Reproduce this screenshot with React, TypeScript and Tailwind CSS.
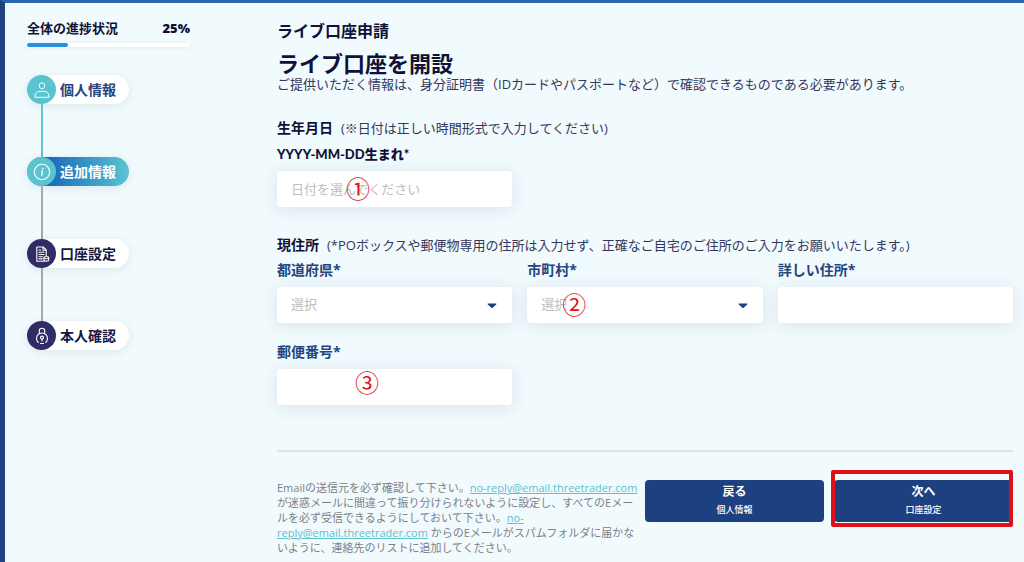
import React from 'react';
import clsx from 'clsx';

type StepState = 'done' | 'active' | 'todo';

interface Step {
  label: string;
  state: StepState;
  icon: React.ReactNode;
}

const EMAIL = 'no-reply@email.threetrader.com';

const PersonIcon = () => (
  <svg viewBox="0 0 18 18" className="h-[18px] w-[18px]" fill="none" stroke="currentColor" strokeWidth="1" strokeLinejoin="round">
    <path d="M6.4 3.4c0-.8.6-1.3 1.3-1.3h2.6c.7 0 1.3.5 1.3 1.3v1.7c0 1.5-1.1 2.6-2.6 2.6S6.4 6.6 6.4 5.1z" />
    <path d="M2 16.3V15c0-2.7 2.2-4.6 4.8-4.6h4.4c2.6 0 4.8 1.9 4.8 4.6v1.3z" />
  </svg>
);

const InfoIcon = () => (
  <svg viewBox="0 0 18 18" className="h-[18px] w-[18px]" fill="none" stroke="currentColor" strokeWidth="1.1" strokeLinecap="round">
    <circle cx="9" cy="9" r="7.7" />
    <path d="M9.4 7.8 8.7 12.4" strokeWidth="1.4" />
    <circle cx="9.8" cy="5.4" r=".5" fill="currentColor" strokeWidth=".6" />
  </svg>
);

const DocumentIcon = () => (
  <svg viewBox="0 0 18 18" className="h-[18px] w-[18px]" fill="none" stroke="currentColor" strokeWidth="1.1" strokeLinejoin="round">
    <path d="M11.6 16.2H3.8V2h6.4l3 3v6" />
    <path d="M10 2v3.300h3.200M5.600 5h2.600M5.600 7.300h5.800M5.600 9.500h5.800M5.600 11.700h4.200M5.600 13.900h4" />
    <ellipse cx="13.3" cy="12.6" rx="2.4" ry="1.1" />
    <path d="M10.9 12.6V15c0 .6 1.1 1.1 2.4 1.1s2.4-.5 2.4-1.100v-2.400" />
  </svg>
);

const LockIcon = () => (
  <svg viewBox="0 0 18 18" className="h-[18px] w-[18px]" fill="none" stroke="currentColor" strokeWidth="1.1" strokeLinecap="round">
    <path d="M6.3 6.400V4a2.700 2.700 0 0 1 5.400 0v2.400" />
    <path d="M5.300 15.500a5.500 5.500 0 1 1 7.400 0" />
    <path d="M7.500 16.500h3" />
    <circle cx="9" cy="10.6" r="1.5" />
    <path d="M9 12.100v2" />
  </svg>
);

const steps: Step[] = [
  { label: '個人情報', state: 'done', icon: <PersonIcon /> },
  { label: '追加情報', state: 'active', icon: <InfoIcon /> },
  { label: '口座設定', state: 'todo', icon: <DocumentIcon /> },
  { label: '本人確認', state: 'todo', icon: <LockIcon /> }
];

const fieldClass =
  'block h-9 w-full appearance-none rounded bg-white px-[14px] text-[13px] shadow-[0_2px_16px_rgba(40,70,100,0.12)] outline-none placeholder:text-[#bcbdc0]';

const Sidebar = ({ progress }: { progress: number }) => (
  <aside className="w-[272px] shrink-0 pt-[15px] pl-[22px]">
    <div className="w-[163px]">
      <div className="flex justify-between text-[13px] leading-5 font-bold text-[#0f1238]">
        <span>全体の進捗状況</span>
        <span className="font-extrabold">{progress}%</span>
      </div>
      <div className="mt-[5px] h-1 rounded-full bg-white shadow-[0_1px_4px_rgba(40,70,100,0.08)]">
        <div className="h-1 rounded-full bg-[#2b8fdc]" style={{ width: `${progress}%` }} />
      </div>
    </div>

    <ol className="mt-7">
      {steps.map((step, i) => (
        <li key={step.label}>
          {i > 0 && (
            <div className={clsx('ml-[14px] h-[53px] w-[2px]', i === 1 ? 'bg-[#62c4cd]' : 'bg-[#a5aab1]')} />
          )}
          <button
            type="button"
            className={clsx(
              'flex h-[29px] w-[102px] items-center gap-1 rounded-full text-[14px] font-bold shadow-[0_2px_8px_rgba(40,70,100,0.10)]',
              step.state === 'done' && 'bg-white text-[#2a437c]',
              step.state === 'active' &&
                'bg-[linear-gradient(to_right,#5ac3cf_15%,#1463b8_15%,#5ac4d2)] text-white',
              step.state === 'todo' && 'bg-white text-[#14173f]'
            )}
          >
            <span
              className={clsx(
                'flex h-[29px] w-[29px] shrink-0 items-center justify-center rounded-full text-white',
                step.state === 'todo' ? 'bg-[#302c66]' : 'bg-[#5ac3cf]'
              )}
            >
              {step.icon}
            </span>
            <span className="whitespace-nowrap">{step.label}</span>
          </button>
        </li>
      ))}
    </ol>
  </aside>
);

// Numbered callout that sits over a field
const Marker = ({ children, className }: { children: string; className: string }) => (
  <span
    className={clsx(
      "pointer-events-none absolute font-['Noto_Sans_CJK_JP',sans-serif] text-[24px] leading-6 text-[#e0131b]",
      className
    )}
  >
    {children}
  </span>
);

interface FieldProps {
  id: string;
  label: string;
  children: React.ReactNode;
}

const Field = ({ id, label, children }: FieldProps) => (
  <div>
    <label htmlFor={id} className="block text-[14px] leading-5 font-bold text-[#24457f]">
      {label}
    </label>
    <div className="relative mt-[7px]">{children}</div>
  </div>
);

const Select = ({ id }: { id: string }) => (
  <>
    <select id={id} defaultValue="" className={clsx(fieldClass, 'text-[#bcbdc0]')}>
      <option value="">選択</option>
    </select>
    <svg viewBox="0 0 10 6" className="pointer-events-none absolute top-4 right-[15px] h-[6px] w-[10px]" fill="#1d3f80">
      <path d="M1.2.5h7.6c.6 0 .8.6.4 1L5.700 4.700c-.4.400-1 .400-1.400 0L.8 1.500C.4 1.100.6.500 1.200.500z" />
    </svg>
  </>
);

const SectionHeading = ({ title, note }: { title: string; note: string }) => (
  <div className="flex items-baseline gap-2 leading-5 whitespace-nowrap">
    <h3 className="text-[14px] font-bold text-[#0f1238]">{title}</h3>
    <p className="text-[13px]">{note}</p>
  </div>
);

const NavButton = ({ title, target }: { title: string; target: string }) => (
  <button type="button" className="block h-[42px] w-full rounded bg-[#1d4180] text-center text-white">
    <span className="block text-[12px] leading-[18px] font-bold">{title}</span>
    <span className="block text-[9px] leading-[18px] font-medium">{target}</span>
  </button>
);

const EmailLink = () => (
  <a href={`mailto:${EMAIL}`} className="text-[#5cc2cc] underline">
    {EMAIL}
  </a>
);

export default function App() {
  return (
    <div
      lang="ja"
      className="flex min-h-screen border-t-[3px] border-l-[5px] border-t-[#2a66ae] border-l-[#20427f] bg-[#f1fafd] font-['Open_Sans','Noto_Sans_CJK_JP',sans-serif] text-[#34375a]"
    >
      <Sidebar progress={25} />

      <main className="min-w-0 flex-1 pt-4 pr-[11px]">
        <h1 className="text-[16px] leading-6 font-bold text-[#0f1238]">ライブ口座申請</h1>
        <h2 className="mt-2 text-[22px] leading-6 font-bold text-[#0f1238]">ライブ口座を開設</h2>
        <p className="text-[13px] leading-[18px]">
          ご提供いただく情報は、身分証明書（IDカードやパスポートなど）で確認できるものである必要があります。
        </p>

        <form>
          <section className="mt-[25px]">
            <SectionHeading title="生年月日" note="(※日付は正しい時間形式で入力してください)" />
            <div className="mt-[6px] grid grid-cols-3 gap-x-[15px]">
              <div>
                <label
                  htmlFor="birthday"
                  className="block font-['Lato','Noto_Sans_CJK_JP',sans-serif] text-[13px] leading-5 font-black text-[#0f1238]"
                >
                  YYYY-MM-DD生まれ*
                </label>
                <div className="relative mt-[7px]">
                  <input id="birthday" type="text" placeholder="日付を選んでください" className={fieldClass} />
                  <Marker className="top-[5px] left-[69px]">①</Marker>
                </div>
              </div>
            </div>
          </section>

          <section className="mt-7">
            <SectionHeading
              title="現住所"
              note="(*POボックスや郵便物専用の住所は入力せず、正確なご自宅のご住所のご入力をお願いいたします。)"
            />
            <div className="mt-[5px] grid grid-cols-3 gap-x-[15px] gap-y-[19px]">
              <Field id="prefecture" label="都道府県*">
                <Select id="prefecture" />
              </Field>
              <Field id="city" label="市町村*">
                <Select id="city" />
                <Marker className="top-[5px] left-[35px]">②</Marker>
              </Field>
              <Field id="address" label="詳しい住所*">
                <input id="address" type="text" className={fieldClass} />
              </Field>
              <Field id="postcode" label="郵便番号*">
                <input id="postcode" type="text" className={fieldClass} />
                <Marker className="top-[1px] left-[78px]">③</Marker>
              </Field>
            </div>
          </section>

          <footer className="mt-[45px] flex items-start border-t-2 border-[#dce5ea] pt-7">
            <p className="w-1/2 pr-[6px] text-[11px] leading-[15px] text-[#7d8085]">
              Emailの送信元を必ず確認して下さい。
              <EmailLink />
              が迷惑メールに間違って振り分けられないように設定し、すべてのEメールを必ず受信できるようにしておいて下さい。
              <EmailLink /> からのEメールがスパムフォルダに届かないように、連絡先のリストに追加してください。
            </p>
            <div className="grid w-1/2 grid-cols-2 gap-[10px]">
              <NavButton title="戻る" target="個人情報" />
              <div className="relative">
                <NavButton title="次へ" target="口座設定" />
                <div className="pointer-events-none absolute -top-[10px] right-0 -bottom-[5px] -left-[3px] rounded-[2px] border-4 border-[#e01018]" />
              </div>
            </div>
          </footer>
        </form>
      </main>
    </div>
  );
}
